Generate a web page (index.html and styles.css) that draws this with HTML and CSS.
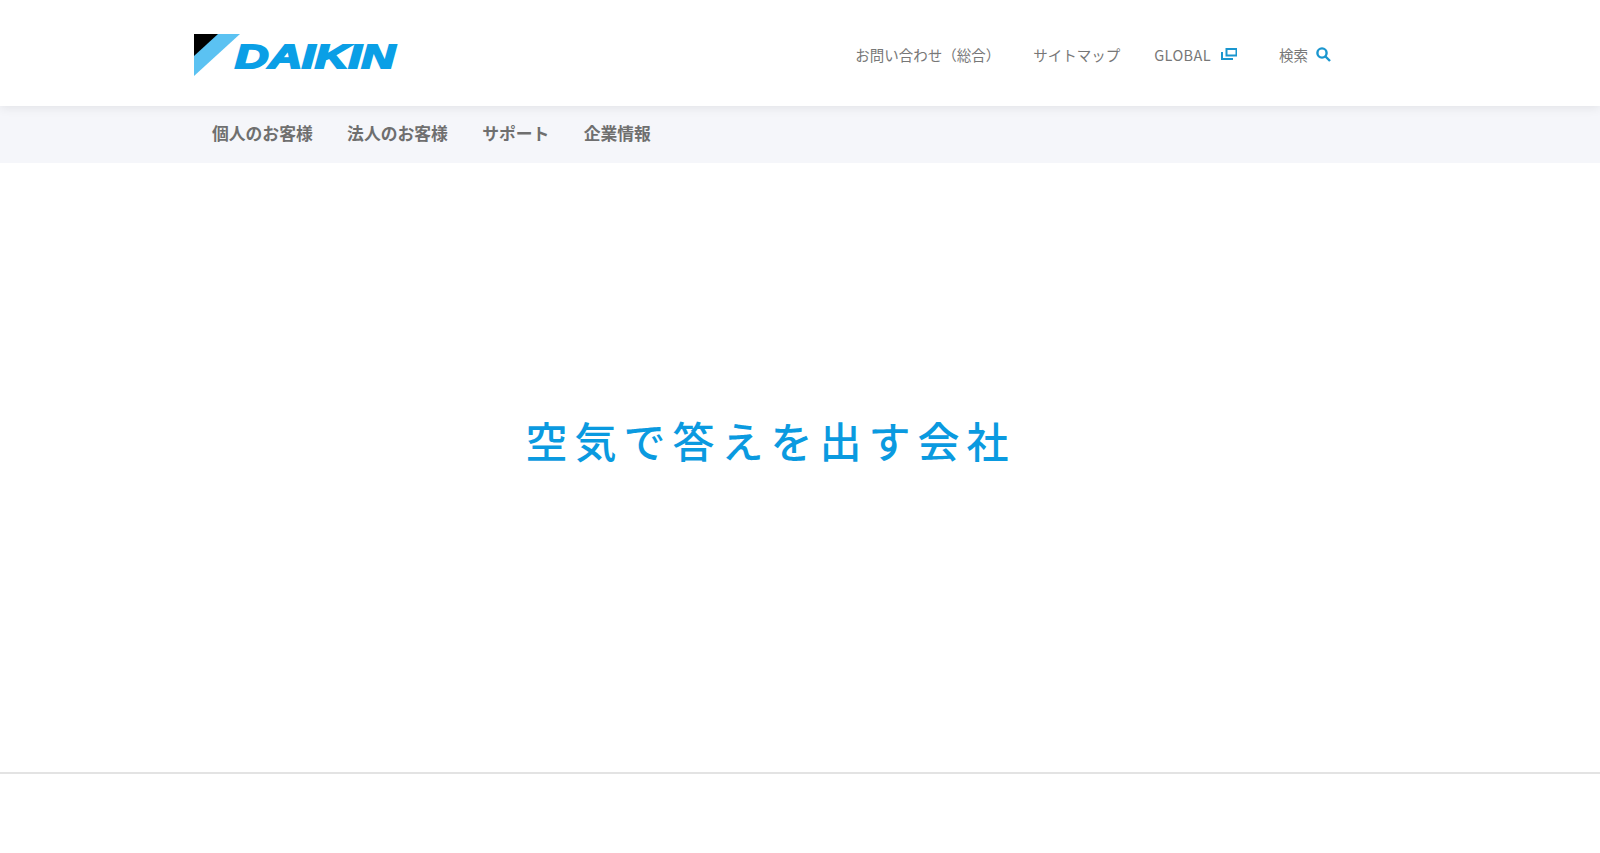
FILE: index.html
```html
<!DOCTYPE html>
<html lang="ja">
<head>
  <meta charset="UTF-8" />
  <meta name="viewport" content="width=device-width, initial-scale=1.0" />
  <title>ダイキン工業株式会社</title>
  <link rel="stylesheet" href="styles.css">
</head>
<body>

  <header class="header">
    <a class="logo" href="#">
      <svg width="205" height="44" viewBox="0 0 205 44">
        <polygon points="0,0 46,0 0,42" fill="#5bc2f2"/>
        <polygon points="0,0 24,0 0,22" fill="#000"/>
        <text class="logo-text" x="41" y="33.5" textLength="160" lengthAdjust="spacingAndGlyphs">DAIKIN</text>
      </svg>
    </a>
    <nav class="util">
      <a href="#">お問い合わせ（総合）</a>
      <a href="#">サイトマップ</a>
      <a class="util-global" href="#">GLOBAL
        <svg width="16" height="12" viewBox="0 0 16 12" fill="none" stroke="#1a96cf">
          <path d="M5.5 1h10v6.5h-10z" stroke-width="2"/>
          <path d="M1 4v7h11" stroke-width="2"/>
        </svg>
      </a>
      <a class="util-search" href="#">検索
        <svg width="15" height="15" viewBox="0 0 15 15" fill="none" stroke="#1a96cf" stroke-width="2.4">
          <circle cx="6" cy="6" r="4.6"/>
          <path d="M9.5 9.5l4.5 4.5"/>
        </svg>
      </a>
    </nav>
  </header>

  <nav class="gnav">
    <a href="#">個人のお客様</a>
    <a href="#">法人のお客様</a>
    <a href="#">サポート</a>
    <a href="#">企業情報</a>
  </nav>

  <main class="hero">
    <h1>空気で答えを出す会社</h1>
  </main>

  <footer class="footer"></footer>

</body>
</html>
```

FILE: styles.css
```css
* {
  box-sizing: border-box;
  margin: 0;
  padding: 0;
}

body {
  background: #fff;
  color: #6b6b6b;
  font-family: "Noto Sans CJK JP", "Noto Sans", sans-serif;
  overflow: hidden;
}

a {
  color: inherit;
  text-decoration: none;
}

.header {
  height: 106px;
  display: flex;
  justify-content: space-between;
  align-items: center;
  padding: 0 269px 0 194px;
  background: #fff;
  position: relative;
  z-index: 1;
  box-shadow: 0 2px 10px rgba(0, 0, 0, 0.08);
}

.logo {
  display: block;
  height: 44px;
  margin-top: 6px;
}

.logo-text {
  font-family: "Liberation Sans", sans-serif;
  font-size: 33px;
  font-weight: bold;
  font-style: italic;
  fill: #0a9fe6;
  stroke: #0a9fe6;
  stroke-width: 2px;
}

.util {
  display: flex;
  align-items: center;
  margin-top: 2px;
  font-size: 14.5px;
  color: #777;
}

.util a {
  display: flex;
  align-items: center;
}

.util a:nth-child(1) { margin-right: 33px; }
.util a:nth-child(2) { margin-right: 34px; }
.util a:nth-child(3) { margin-right: 42px; }

.util-global { letter-spacing: 0.4px; }
.util-global svg { margin-left: 10px; }
.util-search svg { margin-left: 8px; }

.gnav {
  height: 57px;
  display: flex;
  align-items: center;
  gap: 34.4px;
  padding: 0 0 4px 212px;
  background: #f5f6fa;
  font-size: 16.8px;
  font-weight: bold;
  color: #6f6f6f;
}

.hero {
  height: 609px;
  display: flex;
  justify-content: center;
  align-items: center;
  padding: 0 59px 55px 0;
}

.hero h1 {
  font-size: 42px;
  font-weight: 500;
  line-height: 1.2;
  letter-spacing: 7px;
  color: #0a9ae0;
}

.footer {
  height: 81px;
  border-top: 2px solid #e3e3e3;
}
```
